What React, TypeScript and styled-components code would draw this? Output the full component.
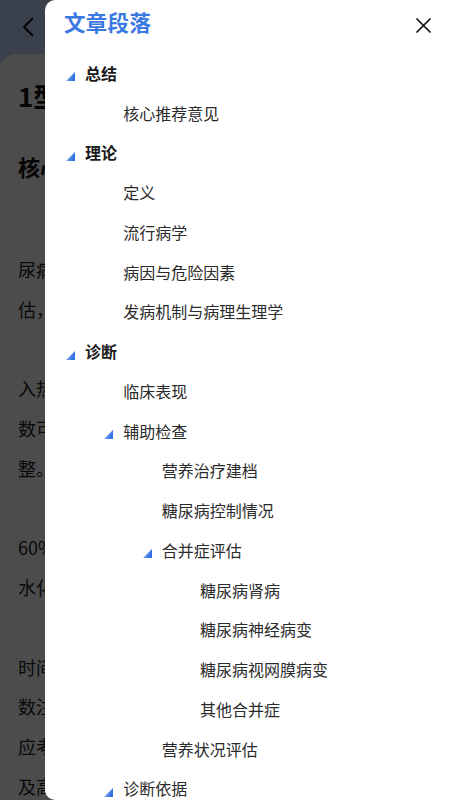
import React, { useState } from "react";
import styled, { createGlobalStyle } from "styled-components";

const GlobalStyle = createGlobalStyle`
  html, body { margin: 0; padding: 0; }
  body {
    font-family: "Noto Sans CJK SC", "Noto Sans", sans-serif;
    -webkit-font-smoothing: antialiased;
  }
  * { box-sizing: border-box; }
`;

const Page = styled.div`
  position: relative;
  width: 100%;
  height: 100vh;
  overflow: hidden;
  background: #c2d6ff;
  display: flex;
  flex-direction: column;
`;

const TopBar = styled.div`
  height: 54px;
  flex: none;
  display: flex;
  align-items: center;
  padding-left: 22px;
`;

const Card = styled.div`
  flex: 1;
  background: #ffffff;
  border-radius: 16px 16px 0 0;
  padding: 22px 18px 0;
  color: #111;
  overflow: hidden;
`;

const ArticleTitle = styled.h1`
  margin: 0;
  font-size: 26px;
  font-weight: 700;
  line-height: 40px;
  white-space: nowrap;
`;

const SectionTitle = styled.h2`
  margin: 30px 0 0;
  font-size: 22px;
  font-weight: 700;
  line-height: 40px;
  white-space: nowrap;
`;

const Body = styled.div`
  margin-top: 64px;
  display: flex;
  flex-direction: column;
  gap: 39.75px;
`;

const Para = styled.div`
  display: flex;
  flex-direction: column;
`;

const Line = styled.div`
  font-size: 18px;
  line-height: 39.75px;
  white-space: nowrap;
  color: #222;
`;

const Overlay = styled.div`
  position: absolute;
  inset: 0;
  background: rgba(0, 0, 0, 0.7);
`;

const Drawer = styled.aside`
  position: absolute;
  top: 0;
  right: 0;
  bottom: 0;
  width: 405px;
  background: #ffffff;
  border-radius: 10px 0 0 10px;
  display: flex;
  flex-direction: column;
`;

const DrawerHeader = styled.div`
  height: 53px;
  flex: none;
  display: flex;
  align-items: flex-start;
  justify-content: space-between;
  padding: 0 19px 0 19px;
`;

const DrawerTitle = styled.div`
  margin-top: 9px;
  font-size: 21.5px;
  line-height: 26px;
  font-weight: 700;
  color: #3a78e2;
  letter-spacing: 0.3px;
`;

const CloseButton = styled.button`
  margin-top: 18px;
  width: 15px;
  height: 15px;
  padding: 0;
  border: 0;
  background: none;
  cursor: pointer;
  display: flex;
`;

const TreeList = styled.div`
  display: flex;
  flex-direction: column;
`;

const Row = styled.div<{ $level: number }>`
  height: 39.75px;
  display: flex;
  align-items: center;
  padding-left: ${(p) => 21 + p.$level * 38.33}px;
  cursor: pointer;
`;

const ToggleSlot = styled.span`
  width: 9px;
  height: 9px;
  flex: none;
  margin-right: 10px;
  display: flex;
  transform: translateY(4px);
`;

const Label = styled.span<{ $top: boolean }>`
  font-size: 16px;
  line-height: 20px;
  font-weight: ${(p) => (p.$top ? 700 : 400)};
  color: ${(p) => (p.$top ? "#1b1b1b" : "#2b2b2b")};
  white-space: nowrap;
`;

type Node = { id: string; title: string; children?: Node[] };

const tree: Node[] = [
  { id: "a", title: "总结", children: [{ id: "a1", title: "核心推荐意见" }] },
  {
    id: "b",
    title: "理论",
    children: [
      { id: "b1", title: "定义" },
      { id: "b2", title: "流行病学" },
      { id: "b3", title: "病因与危险因素" },
      { id: "b4", title: "发病机制与病理生理学" },
    ],
  },
  {
    id: "c",
    title: "诊断",
    children: [
      { id: "c1", title: "临床表现" },
      {
        id: "c2",
        title: "辅助检查",
        children: [
          { id: "c21", title: "营养治疗建档" },
          { id: "c22", title: "糖尿病控制情况" },
          {
            id: "c23",
            title: "合并症评估",
            children: [
              { id: "c231", title: "糖尿病肾病" },
              { id: "c232", title: "糖尿病神经病变" },
              { id: "c233", title: "糖尿病视网膜病变" },
              { id: "c234", title: "其他合并症" },
            ],
          },
          { id: "c24", title: "营养状况评估" },
        ],
      },
      {
        id: "c3",
        title: "诊断依据",
        children: [
          { id: "c31", title: "诊断标准" },
          { id: "c32", title: "鉴别诊断" },
        ],
      },
    ],
  },
];

const Triangle = () => (
  <svg width="9" height="9" viewBox="0 0 9 9">
    <defs>
      <linearGradient id="tg" x1="0" y1="0" x2="1" y2="0.3">
        <stop offset="0" stopColor="#a9c6f6" />
        <stop offset="0.55" stopColor="#5a90ec" />
        <stop offset="1" stopColor="#2f6fe2" />
      </linearGradient>
    </defs>
    <polygon points="9,0 9,9 0,9" fill="url(#tg)" />
  </svg>
);

const TreeItems: React.FC<{
  nodes: Node[];
  level: number;
  open: Record<string, boolean>;
  toggle: (id: string) => void;
}> = ({ nodes, level, open, toggle }) => (
  <>
    {nodes.map((n) => {
      const has = !!n.children && n.children.length > 0;
      const isOpen = has && open[n.id] !== false;
      return (
        <React.Fragment key={n.id}>
          <Row $level={level} onClick={() => has && toggle(n.id)}>
            <ToggleSlot>{has && isOpen ? <Triangle /> : null}</ToggleSlot>
            <Label $top={level === 0}>{n.title}</Label>
          </Row>
          {isOpen && (
            <TreeItems nodes={n.children!} level={level + 1} open={open} toggle={toggle} />
          )}
        </React.Fragment>
      );
    })}
  </>
);

const paragraphs = [
  ["尿病患者营养治疗前应进行全面的营养评", "估，包括膳食摄入、体重变化及代谢指标。"],
  ["入热量应根据患者年龄、体重及活动量计算，", "数可参考标准体重与劳动强度进行调", "整。"],
  ["60%为宜，应选择低血糖生成指数的碳", "水化合物食物。"],
  ["时间与胰岛素注射时间相匹配，", "数注射方案的患者应固定进餐时间，", "应考虑运动前后的加餐安排，", "及高血糖的发生。"],
];

export default function App() {
  const [open, setOpen] = useState<Record<string, boolean>>({});
  const toggle = (id: string) =>
    setOpen((o) => ({ ...o, [id]: o[id] === false ? true : false }));

  return (
    <>
      <GlobalStyle />
      <Page>
        <TopBar>
          <svg width="12" height="20" viewBox="0 0 12 20" fill="none">
            <path d="M10.5 1.5 L2 10 L10.5 18.5" stroke="#000" strokeWidth="1.8" strokeLinecap="round" strokeLinejoin="round" />
          </svg>
        </TopBar>
        <Card>
          <ArticleTitle>1型糖尿病医学营养治疗指南</ArticleTitle>
          <SectionTitle>核心推荐意见</SectionTitle>
          <Body>
            {paragraphs.map((p, i) => (
              <Para key={i}>
                {p.map((l, j) => (
                  <Line key={j}>{l}</Line>
                ))}
              </Para>
            ))}
          </Body>
        </Card>
        <Overlay />
        <Drawer>
          <DrawerHeader>
            <DrawerTitle>文章段落</DrawerTitle>
            <CloseButton aria-label="关闭">
              <svg width="15" height="15" viewBox="0 0 15 15" fill="none">
                <path d="M1 1 L14 14 M14 1 L1 14" stroke="#111" strokeWidth="1.7" strokeLinecap="round" />
              </svg>
            </CloseButton>
          </DrawerHeader>
          <TreeList>
            <TreeItems nodes={tree} level={0} open={open} toggle={toggle} />
          </TreeList>
        </Drawer>
      </Page>
    </>
  );
}
